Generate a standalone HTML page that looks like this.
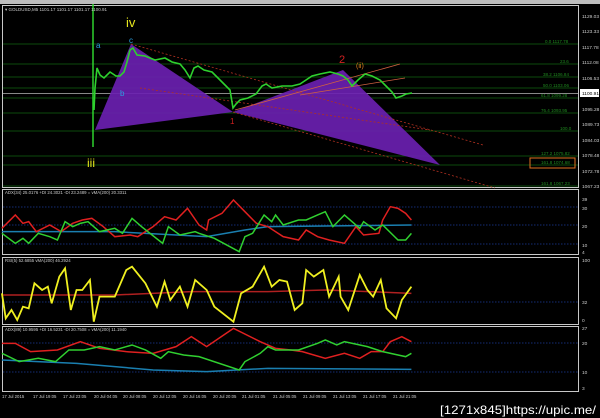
<!DOCTYPE html>
<html><head><style>
body{margin:0;background:#000;width:600px;height:418px;overflow:hidden;font-family:"Liberation Sans",sans-serif}
svg{display:block}
text{font-family:"Liberation Sans",sans-serif}
</style></head><body>
<svg width="600" height="418" viewBox="0 0 600 418" xmlns="http://www.w3.org/2000/svg">
<rect width="600" height="418" fill="#000"/>
<rect x="0" y="0" width="600" height="4" fill="#bdbdbd"/>
<!-- frames -->
<g fill="none" stroke="#c8c8c8" stroke-width="1">
<rect x="2.5" y="5.5" width="576" height="182"/>
<rect x="2.5" y="189.5" width="576" height="65"/>
<rect x="2.5" y="257.5" width="576" height="67"/>
<rect x="2.5" y="326.5" width="576" height="65"/>
</g>
<!-- fib lines -->
<g stroke="#0c4a0c" stroke-width="1">
<line x1="3" y1="44" x2="578" y2="44"/><line x1="3" y1="64" x2="578" y2="64"/>
<line x1="3" y1="77" x2="578" y2="77"/><line x1="3" y1="88" x2="578" y2="88"/>
<line x1="3" y1="98" x2="578" y2="98"/><line x1="3" y1="113" x2="578" y2="113"/>
<line x1="3" y1="131" x2="578" y2="131"/><line x1="3" y1="156" x2="578" y2="156"/>
<line x1="3" y1="165" x2="578" y2="165"/><line x1="3" y1="186" x2="578" y2="186"/>
</g>
<line x1="3" y1="93.5" x2="578" y2="93.5" stroke="#888" stroke-width="1"/>
<g fill="#1f8a1f" font-size="4.5">
<text x="545" y="43">0.0 1117.78</text><text x="560" y="63">23.6</text>
<text x="543" y="76">38.2 1106.84</text><text x="543" y="87">50.0 1103.06</text>
<text x="541" y="97">61.8 1099.28</text><text x="541" y="112">76.4 1093.95</text>
<text x="560" y="130">100.0</text><text x="541" y="155">127.2 1075.82</text>
<text x="541" y="164">161.8 1074.68</text><text x="541" y="185">161.8 1067.23</text>
</g>
<rect x="530" y="158" width="45" height="10" fill="none" stroke="#e07020" stroke-width="1"/>
<!-- purple triangles -->
<polygon points="95,130 131,44 233,112" fill="#6a1fb0" opacity="0.92"/>
<polygon points="233,112 343,70 440,165" fill="#6a1fb0" opacity="0.92"/>
<!-- trend lines -->
<g fill="none" stroke="#b03020" stroke-width="0.8" stroke-dasharray="2,2">
<line x1="131" y1="44" x2="483" y2="145"/>
<line x1="233" y1="112" x2="495" y2="188"/>
<line x1="140" y1="88" x2="430" y2="130"/>
</g>
<g stroke="#d06040" stroke-width="0.8">
<line x1="235" y1="110" x2="400" y2="64"/>
<line x1="300" y1="95" x2="405" y2="78"/>
</g>
<!-- price -->
<line x1="93" y1="4" x2="93" y2="147" stroke="#2ed12e" stroke-width="1.5"/>
<polyline fill="none" stroke="#2ed12e" stroke-width="1.6" points="94,110 95,88 97,68 100,75 104,78 110,72 116,76 120,76 124,72 127,62 130,50 133,48 137,55 145,56 155,60 165,58 172,62 180,64 185,70 190,78 194,68 198,66 204,70 212,72 220,80 226,86 230,90 233,108 236,104 240,100 248,98 256,94 262,86 266,84 272,88 282,86 292,86 300,84 306,80 312,76 320,74 330,72 338,74 343,76 348,80 352,86 358,80 365,74 372,76 380,80 386,86 392,92 396,98 402,96 406,94 412,93"/>
<!-- labels -->
<text x="126" y="27" fill="#e6e61e" font-size="13">iv</text>
<text x="87" y="167" fill="#e6e61e" font-size="12">iii</text>
<text x="96" y="48" fill="#2aa0e0" font-size="8">a</text>
<text x="129" y="43" fill="#2aa0e0" font-size="8">c</text>
<text x="120" y="96" fill="#2aa0e0" font-size="8">b</text>
<text x="230" y="124" fill="#d02020" font-size="8">1</text>
<text x="339" y="63" fill="#d02020" font-size="11">2</text>
<text x="356" y="68" fill="#e08020" font-size="7">(ii)</text>
<text x="5" y="11" fill="#ccc" font-size="4.5">▾ GOLDUSD,M5  1101.17 1101.17 1101.17 1100.91</text>
<!-- right axis main -->
<g fill="#ccc" font-size="4.8">
<text x="582" y="18">1129.03</text><text x="582" y="33">1123.33</text><text x="582" y="49">1117.78</text>
<text x="582" y="64">1112.08</text><text x="582" y="80">1106.53</text>
<text x="582" y="111">1095.28</text><text x="582" y="126">1089.73</text><text x="582" y="142">1084.03</text>
<text x="582" y="157">1078.48</text><text x="582" y="173">1072.78</text><text x="582" y="188">1067.23</text>
<text x="582" y="201">39</text><text x="582" y="210">30</text><text x="582" y="228">20</text><text x="582" y="247">10</text><text x="582" y="254">4</text>
<text x="582" y="262">100</text><text x="582" y="304">32</text><text x="582" y="322">0</text>
<text x="582" y="330">27</text><text x="582" y="345">20</text><text x="582" y="374">10</text><text x="582" y="390">3</text>
</g>
<rect x="580" y="89" width="19" height="8" fill="#fff"/>
<text x="582" y="95" fill="#000" font-size="4.8">1100.91</text>
<!-- indicator dotted lines -->
<g stroke="#1a3a9a" stroke-width="0.8" stroke-dasharray="1.5,1.5">
<line x1="3" y1="207" x2="578" y2="207"/><line x1="3" y1="225" x2="578" y2="225"/><line x1="3" y1="244" x2="578" y2="244"/>
<line x1="3" y1="302" x2="578" y2="302"/>
<line x1="3" y1="343" x2="578" y2="343"/><line x1="3" y1="372" x2="578" y2="372"/>
</g>
<g fill="#ccc" font-size="4.3">
<text x="5" y="194">ADX(34) 25.0176 +DI 24.3021 -DI 23.2489 = vMA(200) 20.3311</text>
<text x="5" y="262">RSI(5) 52.6855 vMA(200) 46.2924</text>
<text x="5" y="331">ADX(89) 10.9595 +DI 16.5231 -DI 20.7508 = vMA(200) 11.1940</text>
</g>
<g transform="translate(0,190) scale(0.3827,0.3333)" fill="none" stroke-width="1.5">
<polyline vector-effect="non-scaling-stroke" stroke="#1a7fb0" points="5,125 300,125 540,140 640,120 700,110 1075,105"/>
<polyline vector-effect="non-scaling-stroke" stroke="#e02020" points="5,115 40,75 60,100 75,95 95,125 130,105 160,125 190,100 215,90 240,85 270,110 300,140 340,135 360,140 400,110 430,80 460,90 490,55 520,105 540,120 545,90 580,70 610,30 640,65 670,100 700,110 740,140 780,150 800,120 830,140 860,150 900,160 930,110 950,135 990,130 1000,90 1020,50 1040,55 1060,70 1075,90"/>
<polyline vector-effect="non-scaling-stroke" stroke="#30d030" points="5,130 40,160 60,145 75,160 100,130 130,140 150,150 170,95 190,110 210,100 230,95 260,125 300,115 320,130 345,85 370,110 425,160 440,110 470,135 510,125 520,130 560,145 625,185 640,140 660,130 690,75 710,95 720,75 740,105 780,90 800,90 830,75 850,65 870,110 900,75 940,115 950,95 980,120 1000,105 1040,150 1060,150 1075,130"/>
<polyline vector-effect="non-scaling-stroke" stroke="#b02020" points="5,315 300,315 500,305 700,305 850,300 1075,310"/>
<polyline vector-effect="non-scaling-stroke" stroke="#f0f020" stroke-width="1.8" points="5,310 15,385 30,360 45,390 60,350 75,355 90,280 110,300 125,290 135,340 155,260 170,235 185,360 200,300 215,300 235,270 245,395 260,320 300,320 330,240 345,230 380,280 410,350 430,275 445,330 470,290 490,350 510,270 540,300 560,350 610,395 630,310 660,290 690,230 710,290 730,270 750,275 770,360 790,340 800,240 820,260 845,240 860,320 885,260 890,320 910,360 940,255 960,300 975,320 995,270 1010,355 1035,385 1050,330 1075,290"/>
<polyline vector-effect="non-scaling-stroke" stroke="#1a7fb0" points="5,510 200,520 400,540 540,545 700,535 1075,538"/>
<polyline vector-effect="non-scaling-stroke" stroke="#e02020" points="5,460 40,460 80,485 150,480 210,455 260,475 330,485 400,490 460,470 500,440 540,470 610,415 680,455 720,475 760,480 790,485 850,505 900,490 940,505 970,485 1000,485 1020,455 1050,440 1075,455"/>
<polyline vector-effect="non-scaling-stroke" stroke="#30d030" points="5,490 50,515 100,505 145,515 180,480 220,480 260,470 300,480 345,465 380,480 420,505 440,485 480,495 520,500 625,540 640,515 680,490 700,470 720,480 740,480 780,480 830,460 850,450 880,465 900,455 960,470 1000,485 1040,495 1060,500 1075,490"/>
</g>
<!-- time axis -->
<g fill="#ccc" font-size="4.3">
<text x="2" y="398">17 Jul 2015</text><text x="33" y="398">17 Jul 19:05</text><text x="63" y="398">17 Jul 23:05</text>
<text x="94" y="398">20 Jul 04:05</text><text x="123" y="398">20 Jul 08:05</text><text x="153" y="398">20 Jul 12:05</text>
<text x="183" y="398">20 Jul 16:05</text><text x="213" y="398">20 Jul 20:05</text><text x="242" y="398">21 Jul 01:05</text>
<text x="273" y="398">21 Jul 05:05</text><text x="303" y="398">21 Jul 09:05</text><text x="333" y="398">21 Jul 13:05</text>
<text x="363" y="398">21 Jul 17:05</text><text x="393" y="398">21 Jul 21:05</text>
</g>
<text x="440" y="414" fill="#fff" font-size="12" font-family="Liberation Sans Narrow, Liberation Sans, sans-serif" textLength="156" lengthAdjust="spacingAndGlyphs">[1271x845]https://upic.me/</text>
</svg>
</body></html>
